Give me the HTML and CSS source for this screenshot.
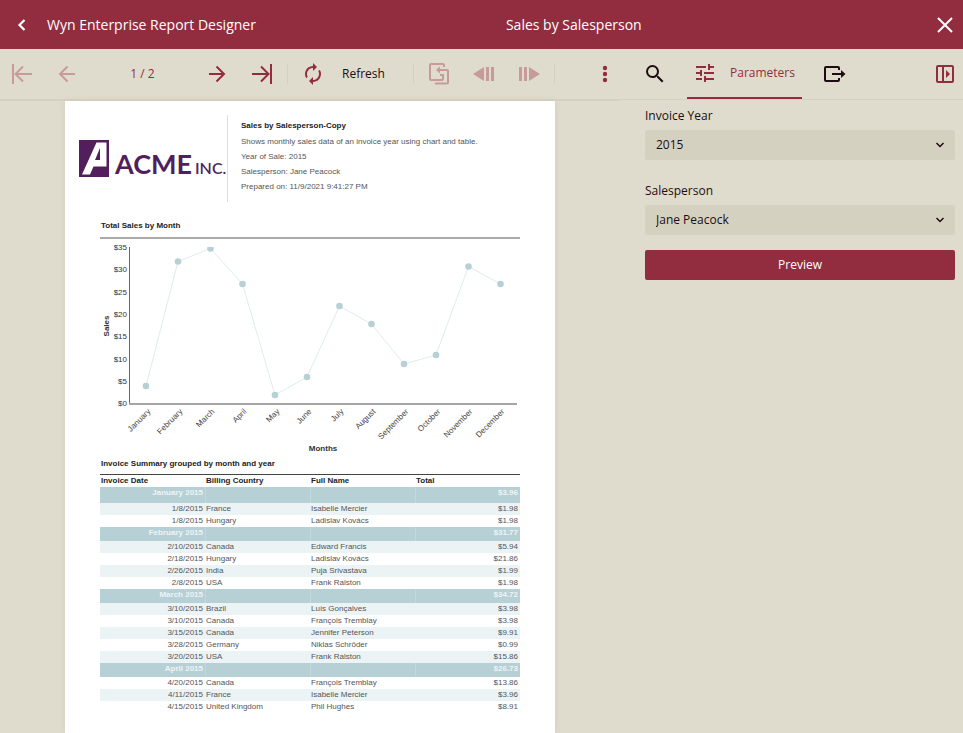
FILE: index.html
```html
<!DOCTYPE html>
<html lang="en">
<head>
<meta charset="utf-8">
<title>Sales by Salesperson</title>
<link rel="stylesheet" href="styles.css">
</head>
<body>
<header class="topbar">
  <button class="back" aria-label="Back"><svg width="24" height="24" viewBox="0 0 24 24"><path d="M14.500 7L9.500 12L14.500 17" fill="none" stroke="currentColor" stroke-width="2.2"/></svg></button>
  <span class="app-name">Wyn Enterprise Report Designer</span>
  <h1 class="doc-title">Sales by Salesperson</h1>
  <button class="close" aria-label="Close"><svg width="24" height="24" viewBox="0 0 24 24"><path d="M5 5L19 19M19 5L5 19" fill="none" stroke="currentColor" stroke-width="2"/></svg></button>
</header>
<div class="workspace">
  <main class="viewer">
    <div class="toolbar">
      <button class="tool" disabled aria-label="First page"><svg width="24" height="24" viewBox="0 0 24 24"><path class="line" d="M3 2V22M22 12H5M13 4.500L5.500 12L13 19.500"/></svg></button>
      <button class="tool" disabled aria-label="Previous page"><svg width="24" height="24" viewBox="0 0 24 24"><path class="line" d="M20 12H5M12.500 4.500L5 12L12.500 19.500"/></svg></button>
      <span class="page-count">1 / 2</span>
      <button class="tool" aria-label="Next page"><svg width="24" height="24" viewBox="0 0 24 24"><path class="line" d="M4 12H19M11.500 4.500L19 12L11.500 19.500"/></svg></button>
      <button class="tool" aria-label="Last page"><svg width="24" height="24" viewBox="0 0 24 24"><path class="line" d="M21 2V22M2 12H19M11 4.500L18.500 12L11 19.500"/></svg></button>
      <span class="divider"></span>
      <button class="tool refresh"><svg width="24" height="24" viewBox="0 0 24 24"><path fill="currentColor" d="M12 6v3l4-4-4-4v3c-4.420 0-8 3.580-8 8 0 1.570.460 3.030 1.240 4.260L6.700 14.800A5.870 5.870 0 0 1 6 12c0-3.310 2.690-6 6-6zm6.760 1.740L17.300 9.200c.440.840.700 1.790.700 2.800 0 3.310-2.690 6-6 6v-3l-4 4 4 4v-3c4.420 0 8-3.580 8-8 0-1.570-.460-3.030-1.240-4.260z"/></svg><span>Refresh</span></button>
      <span class="divider"></span>
      <button class="tool" disabled aria-label="Back to parent"><svg width="24" height="24" viewBox="0 0 24 24"><path class="line" d="M17 5V3Q17 2 16 2H4Q3 2 3 3V17Q3 18 4 18H15Q16 18 16 17V13H13M8 21.500H20Q21 21.500 21 20.500V9Q21 8 20 8H11"/><path fill="currentColor" d="M9 8L13 4.500V11.500Z"/></svg></button>
      <button class="tool" disabled aria-label="Back in history"><svg width="24" height="24" viewBox="0 0 24 24"><path fill="currentColor" d="M1 12L12 5V19ZM14 5H17V19H14ZM19 5H22V19H19Z"/></svg></button>
      <button class="tool" disabled aria-label="Forward in history"><svg width="24" height="24" viewBox="0 0 24 24"><path fill="currentColor" d="M23 12L12 5V19ZM2 5H5V19H2ZM7 5H10V19H7Z"/></svg></button>
      <span class="divider"></span>
      <button class="tool more" aria-label="More"><svg width="24" height="24" viewBox="0 0 24 24" fill="currentColor"><circle cx="12" cy="6" r="2.200"/><circle cx="12" cy="12" r="2.200"/><circle cx="12" cy="18" r="2.200"/></svg></button>
    </div>
    <article class="sheet">
      <div class="report-head">
        <svg class="logo" width="148" height="37" viewBox="0 0 148 37" role="img" aria-label="ACME INC.">
          <rect x="0" y="0" width="30" height="37" fill="#521f5c"/>
          <path fill="#fff" d="M17.500 2.500H27.500V26.500H14.500L11 34.500H3ZM21 8L16 20H21Z" fill-rule="evenodd"/>
          <text class="logo-name" x="36" y="34">ACME</text>
          <text class="logo-suffix" x="116" y="34">INC.</text>
        </svg>
        <div class="summary">
          <h2>Sales by Salesperson-Copy</h2>
          <p>Shows monthly sales data of an invoice year using chart and table.</p>
          <p>Year of Sale: 2015</p>
          <p>Salesperson: Jane Peacock</p>
          <p>Prepared on: 11/9/2021 9:41:27 PM</p>
        </div>
      </div>
      <h3 class="section chart-title">Total Sales by Month</h3>
      <svg class="chart" viewBox="100 239 420 217">
        <path class="y-axis" d="M129.500 247V404"/>
        <path class="x-axis" d="M129 404H517"/>
        <g class="ticks">
          <text x="127" y="250">$35</text><text x="127" y="272">$30</text><text x="127" y="295">$25</text><text x="127" y="317">$20</text><text x="127" y="339">$15</text><text x="127" y="362">$10</text><text x="127" y="384">$5</text><text x="127" y="406">$0</text>
        </g>
        <text class="axis-title" transform="translate(109 326) rotate(-90)">Sales</text>
        <text class="axis-title" x="323" y="451">Months</text>
        <clipPath id="plot"><rect x="129" y="247" width="390" height="157"/></clipPath>
        <g clip-path="url(#plot)">
          <polyline class="series" points="146,386 178,261.500 210.500,248.500 242.500,284 275,395 307,377 339.500,306 371.500,324 404,364 436,355 468.500,266.500 500.500,284"/>
          <g class="dots"><circle cx="146" cy="386" r="3.300"/><circle cx="178" cy="261.500" r="3.300"/><circle cx="210.500" cy="248.500" r="3.300"/><circle cx="242.500" cy="284" r="3.300"/><circle cx="275" cy="395" r="3.300"/><circle cx="307" cy="377" r="3.300"/><circle cx="339.500" cy="306" r="3.300"/><circle cx="371.500" cy="324" r="3.300"/><circle cx="404" cy="364" r="3.300"/><circle cx="436" cy="355" r="3.300"/><circle cx="468.500" cy="266.500" r="3.300"/><circle cx="500.500" cy="284" r="3.300"/></g>
        </g>
        <g class="months">
          <text transform="translate(151 412) rotate(-45)">January</text><text transform="translate(183 412) rotate(-45)">February</text><text transform="translate(215 412) rotate(-45)">March</text><text transform="translate(247 412) rotate(-45)">April</text><text transform="translate(280 412) rotate(-45)">May</text><text transform="translate(312 412) rotate(-45)">June</text><text transform="translate(344 412) rotate(-45)">July</text><text transform="translate(376 412) rotate(-45)">August</text><text transform="translate(409 412) rotate(-45)">September</text><text transform="translate(441 412) rotate(-45)">October</text><text transform="translate(473 412) rotate(-45)">November</text><text transform="translate(505 412) rotate(-45)">December</text>
        </g>
      </svg>
      <h3 class="section">Invoice Summary grouped by month and year</h3>
      <table class="invoices">
        <thead><tr><th>Invoice Date</th><th>Billing Country</th><th>Full Name</th><th>Total</th></tr></thead>
        <tbody>
          <tr class="group first"><td>January 2015</td><td></td><td></td><td>$3.96</td></tr>
          <tr class="alt"><td>1/8/2015</td><td>France</td><td>Isabelle Mercier</td><td>$1.98</td></tr>
          <tr><td>1/8/2015</td><td>Hungary</td><td>Ladislav Kovács</td><td>$1.98</td></tr>
        </tbody>
        <tbody>
          <tr class="group"><td>February 2015</td><td></td><td></td><td>$31.77</td></tr>
          <tr class="alt"><td>2/10/2015</td><td>Canada</td><td>Edward Francis</td><td>$5.94</td></tr>
          <tr><td>2/18/2015</td><td>Hungary</td><td>Ladislav Kovács</td><td>$21.86</td></tr>
          <tr class="alt"><td>2/26/2015</td><td>India</td><td>Puja Srivastava</td><td>$1.99</td></tr>
          <tr><td>2/8/2015</td><td>USA</td><td>Frank Ralston</td><td>$1.98</td></tr>
        </tbody>
        <tbody>
          <tr class="group"><td>March 2015</td><td></td><td></td><td>$34.72</td></tr>
          <tr class="alt"><td>3/10/2015</td><td>Brazil</td><td>Luís Gonçalves</td><td>$3.98</td></tr>
          <tr><td>3/10/2015</td><td>Canada</td><td>François Tremblay</td><td>$3.98</td></tr>
          <tr class="alt"><td>3/15/2015</td><td>Canada</td><td>Jennifer Peterson</td><td>$9.91</td></tr>
          <tr><td>3/28/2015</td><td>Germany</td><td>Niklas Schröder</td><td>$0.99</td></tr>
          <tr class="alt"><td>3/20/2015</td><td>USA</td><td>Frank Ralston</td><td>$15.86</td></tr>
        </tbody>
        <tbody>
          <tr class="group"><td>April 2015</td><td></td><td></td><td>$26.73</td></tr>
          <tr><td>4/20/2015</td><td>Canada</td><td>François Tremblay</td><td>$13.86</td></tr>
          <tr class="alt"><td>4/11/2015</td><td>France</td><td>Isabelle Mercier</td><td>$3.96</td></tr>
          <tr><td>4/15/2015</td><td>United Kingdom</td><td>Phil Hughes</td><td>$8.91</td></tr>
        </tbody>
      </table>
    </article>
  </main>
  <aside class="sidebar">
    <div class="tabs">
      <button class="tab" aria-label="Search"><svg width="24" height="24" viewBox="0 0 24 24"><path fill="currentColor" d="M15.500 14h-.790l-.280-.270A6.470 6.470 0 0 0 16 9.500 6.500 6.500 0 1 0 9.500 16c1.610 0 3.090-.590 4.230-1.570l.270.280v.790l5 4.990L20.490 19l-4.990-5zm-6 0C7.010 14 5 11.990 5 9.500S7.010 5 9.500 5 14 7.010 14 9.500 11.990 14 9.500 14z"/></svg></button>
      <button class="tab active"><svg width="24" height="24" viewBox="0 0 24 24"><path fill="currentColor" d="M3 17v2h6v-2H3zM3 5v2h10V5H3zm10 16v-2h8v-2h-8v-2h-2v6h2zM7 9v2H3v2h4v2h2V9H7zm14 4v-2H11v2h10zm-6-4h2V7h4V5h-4V3h-2v6z"/></svg><span>Parameters</span></button>
      <button class="tab" aria-label="Export"><svg width="24" height="24" viewBox="0 0 24 24"><path class="line" d="M16 8V6Q16 5 15 5H3Q2 5 2 6V18Q2 19 3 19H15Q16 19 16 18V16M9 12H19"/><path fill="currentColor" d="M18 8L22.500 12L18 16Z"/></svg></button>
      <button class="tab toggle" aria-label="Toggle panel"><svg width="24" height="24" viewBox="0 0 24 24"><rect class="line" x="4" y="4" width="16" height="16" rx="1"/><path class="line" d="M10 4V20"/><path fill="currentColor" d="M13 8L17 12L13 16Z"/></svg></button>
    </div>
    <form class="params">
      <label for="year">Invoice Year</label>
      <div class="select"><select id="year"><option>2015</option></select><svg width="10" height="6" viewBox="0 0 10 6"><path d="M1.500 1L5 4.500L8.500 1"/></svg></div>
      <label for="person">Salesperson</label>
      <div class="select"><select id="person"><option>Jane Peacock</option></select><svg width="10" height="6" viewBox="0 0 10 6"><path d="M1.500 1L5 4.500L8.500 1"/></svg></div>
      <button class="preview" type="button">Preview</button>
    </form>
  </aside>
</div>
</body>
</html>
```
FILE: styles.css
```css
* { box-sizing: border-box; }

body {
  margin: 0;
  height: 100vh;
  display: flex;
  flex-direction: column;
  overflow: hidden;
  background: #e0dccd;
  color: #1d0c10;
  font: 12px/20px "Open Sans", sans-serif;
}

button, select { font: inherit; color: inherit; }

button {
  display: flex;
  align-items: center;
  justify-content: center;
  border: 0;
  padding: 0;
  background: none;
}

svg { display: block; flex: none; }
.line { fill: none; stroke: currentColor; stroke-width: 2; }

.topbar {
  flex: none;
  display: flex;
  align-items: center;
  height: 49px;
  padding: 0 6px 0 10px;
  background: #912d3f;
  color: #fff;
  font-size: 14px;
}
.app-name { margin-left: 13px; }
.doc-title { margin: 0 0 0 250px; font-size: 14px; font-weight: 400; }
.close { margin-left: auto; }

.workspace { flex: 1; min-height: 0; display: flex; }
.viewer { flex: 1; min-width: 0; overflow: hidden; display: flex; flex-direction: column; }

.toolbar {
  flex: none;
  display: flex;
  align-items: center;
  height: 52px;
  border-bottom: 2px solid #d5d1c1;
  color: #912d3f;
}
.tool { width: 45px; height: 50px; padding-right: 1px; }
.tool:disabled { color: #c69b99; }
.page-count { width: 105px; text-align: center; }
.divider { width: 1px; height: 20px; margin: 0 3px 0 2px; background: #d5d1c1; }
.refresh { width: 120px; padding: 0 10px; justify-content: flex-start; }
.refresh span { margin-left: 17px; color: #1d0c10; }
.more { width: 26px; margin: 0 2px 0 auto; padding: 0; }

.sheet {
  flex: 1 0 auto;
  width: 490px;
  margin: 0 auto;
  padding: 14px 35px;
  background: #fff;
  box-shadow: 0 0 6px #cfcbbc;
  color: #555;
  font: 8px/15px "Liberation Sans", Arial, sans-serif;
}
.sheet h2, .sheet h3, .sheet p { margin: 0; font-size: 8px; }
.sheet h2, .sheet h3 { color: #222; }

.report-head { display: flex; align-items: center; height: 87px; margin: 0 0 16px -21px; }
.logo { overflow: visible; }
.logo-name, .logo-suffix { fill: #521f5c; font-family: Lato, sans-serif; }
.logo-name { font-size: 27px; font-weight: 700; }
.logo-suffix { font-size: 16px; font-weight: 600; }
.summary { height: 87px; padding: 3px 0 0 13px; border-left: 1px solid #ddd; }
.summary h2 { line-height: 16px; }

.section { padding-left: 1px; }
.chart-title { padding-bottom: 4px; border-bottom: 2px solid #aaa; }
.chart { width: 100%; font-size: 8px; }
.y-axis { stroke: #666; fill: none; }
.x-axis { stroke: #a5a5a5; stroke-width: 2; fill: none; }
.ticks text { text-anchor: end; fill: #333; }
.months text { text-anchor: end; fill: #444; }
.axis-title { text-anchor: middle; fill: #333; font-weight: 700; }
.series { fill: none; stroke: #dfecee; }
.dots { fill: #b6d0d5; }

.invoices {
  width: 100%;
  margin-top: 3px;
  border-top: 1px solid #444;
  border-spacing: 0;
  table-layout: fixed;
  line-height: 12px;
}
.invoices th, .invoices td { padding: 0 1px; height: 12px; vertical-align: top; text-align: left; }
.invoices th { color: #222; }
.invoices td:first-child, .invoices td:last-child { padding-right: 2px; text-align: right; }
.invoices .alt { background: #ebf3f5; }
.invoices .group { background: #b6d0d5; color: #edf4f5; font-weight: 700; }
.invoices .group td { height: 14px; }
.invoices .group.first td { height: 16px; }
.invoices .group td + td { box-shadow: inset 1px 0 #c3d9dd; }

.sidebar { flex: none; width: 343px; }
.tabs { display: flex; gap: 10px; height: 51px; padding-left: 12px; border-bottom: 1px solid #d5d1c1; }
.tab { width: 45px; height: 50px; }
.tab.active { width: 115px; padding-left: 6px; justify-content: flex-start; border-bottom: 2px solid #912d3f; color: #912d3f; }
.tab.active span { margin-left: 13px; }
.toggle { width: 36px; margin-left: auto; color: #912d3f; }

.params { padding: 0 8px 0 25px; }
.params label { display: block; height: 30px; line-height: 32px; }
.select { position: relative; margin-bottom: 15px; }
.select select {
  display: block;
  width: 100%;
  height: 30px;
  padding: 0 11px;
  border: 0;
  border-radius: 2px;
  background: #d5d1c1;
  appearance: none;
}
.select svg { position: absolute; right: 10px; top: 12px; fill: none; stroke: #1d0c10; stroke-width: 1.5; }
.preview { width: 100%; height: 30px; border-radius: 2px; background: #912d3f; color: #fff; }
```
